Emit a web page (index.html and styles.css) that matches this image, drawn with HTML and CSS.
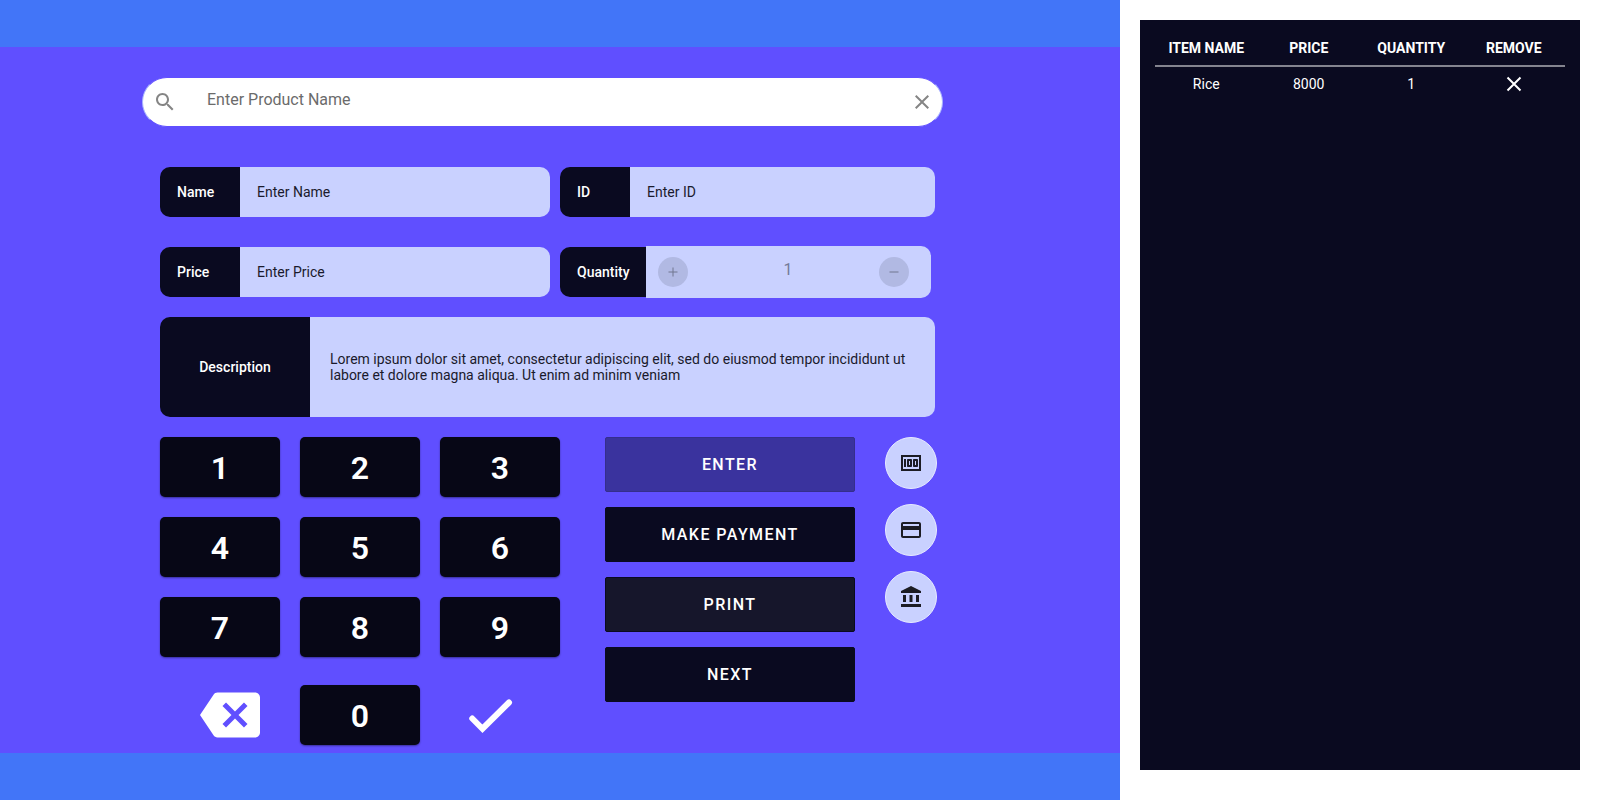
FILE: index.html
```html
<!DOCTYPE html>
<html lang="en">
<head>
<meta charset="utf-8">
<title>Point of Sale</title>
<link rel="stylesheet" href="styles.css">
</head>
<body>
<div class="app">
  <main class="register">
    <div class="register-panel">
      <form class="search" role="search">
        <svg class="icon search-icon" viewBox="0 0 24 24"><path d="M15.5 14h-.79l-.28-.27C15.41 12.59 16 11.11 16 9.5 16 5.91 13.09 3 9.5 3S3 5.91 3 9.5 5.91 16 9.5 16c1.61 0 3.09-.59 4.23-1.57l.27.28v.79l5 4.99L20.49 19l-4.99-5zm-6 0C7.01 14 5 11.99 5 9.5S7.01 5 9.5 5 14 7.01 14 9.5 11.99 14 9.5 14z"/></svg>
        <input class="search-input" type="text" placeholder="Enter Product Name" aria-label="Product name">
        <button class="plain-button" type="reset" aria-label="Clear search">
          <svg class="icon" viewBox="0 0 24 24"><path d="M19 6.41 17.59 5 12 10.59 6.41 5 5 6.41 10.59 12 5 17.59 6.41 19 12 13.41 17.59 19 19 17.59 13.41 12z"/></svg>
        </button>
      </form>

      <div class="fields">
        <div class="field">
          <label class="field-label" for="name">Name</label>
          <input class="field-input" id="name" type="text" placeholder="Enter Name">
        </div>
        <div class="field">
          <label class="field-label field-label-id" for="item-id">ID</label>
          <input class="field-input" id="item-id" type="text" placeholder="Enter ID">
        </div>
        <div class="field">
          <label class="field-label" for="price">Price</label>
          <input class="field-input" id="price" type="text" placeholder="Enter Price">
        </div>
        <div class="field">
          <label class="field-label field-label-quantity" for="quantity">Quantity</label>
          <div class="stepper">
            <button class="step-button" type="button" aria-label="Increase quantity">
              <svg class="step-icon" viewBox="0 0 10 10"><path d="M5 0.5v9M0.5 5h9"/></svg>
            </button>
            <input class="step-input" id="quantity" type="text" inputmode="numeric" value="1">
            <button class="step-button" type="button" aria-label="Decrease quantity">
              <svg class="step-icon" viewBox="0 0 10 10"><path d="M0.5 5h9"/></svg>
            </button>
          </div>
        </div>
      </div>

      <div class="description">
        <label class="description-label" for="description">Description</label>
        <textarea class="description-input" id="description">Lorem ipsum dolor sit amet, consectetur adipiscing elit, sed do eiusmod tempor incididunt ut labore et dolore magna aliqua. Ut enim ad minim veniam</textarea>
      </div>

      <div class="controls">
        <div class="keypad">
          <div class="keys">
            <button class="key" type="button">1</button>
            <button class="key" type="button">2</button>
            <button class="key" type="button">3</button>
            <button class="key" type="button">4</button>
            <button class="key" type="button">5</button>
            <button class="key" type="button">6</button>
            <button class="key" type="button">7</button>
            <button class="key" type="button">8</button>
            <button class="key" type="button">9</button>
          </div>
          <div class="keys">
            <button class="key-icon key-backspace" type="button" aria-label="Backspace">
              <svg class="icon-large" viewBox="0 0 24 24"><path d="M22 3H7c-.69 0-1.230.35-1.590.88L0 12l5.410 8.110c.36.53.9.89 1.590.89h15c1.100 0 2-.9 2-2V5c0-1.100-.9-2-2-2zm-3 12.590L17.590 17 14 13.410 10.410 17 9 15.590 12.590 12 9 8.410 10.410 7 14 10.590 17.590 7 19 8.410 15.410 12 19 15.590z"/></svg>
            </button>
            <button class="key" type="button">0</button>
            <button class="key-icon key-confirm" type="button" aria-label="Confirm">
              <svg class="icon-large" viewBox="0 0 24 24"><path d="M4.900 13.400 9 17.500 19.600 7" fill="none" stroke="currentColor" stroke-width="2.400" stroke-linecap="round"/></svg>
            </button>
          </div>
        </div>

        <div class="actions">
          <button class="action action-enter" type="button">ENTER</button>
          <button class="action" type="button">MAKE PAYMENT</button>
          <button class="action action-print" type="button">PRINT</button>
          <button class="action" type="button">NEXT</button>
        </div>

        <div class="methods">
          <button class="method" type="button" aria-label="Cash">
            <svg class="icon" viewBox="0 0 24 24"><path fill-rule="evenodd" d="M5 8h2v8H5zM12 8H9c-.55 0-1 .45-1 1v6c0 .55.45 1 1 1h3c.55 0 1-.45 1-1V9c0-.55-.45-1-1-1zm-1 6h-1v-4h1v4zM18 8h-3c-.55 0-1 .45-1 1v6c0 .55.45 1 1 1h3c.55 0 1-.45 1-1V9c0-.55-.45-1-1-1zm-1 6h-1v-4h1v4zM2 4v16h20V4H2zm2 14V6h16v12H4z"/></svg>
          </button>
          <button class="method" type="button" aria-label="Card">
            <svg class="icon" viewBox="0 0 24 24"><path d="M20 4H4c-1.110 0-1.990.89-1.990 2L2 18c0 1.110.89 2 2 2h16c1.110 0 2-.89 2-2V6c0-1.110-.89-2-2-2zm0 14H4v-6h16v6zm0-10H4V6h16v2z"/></svg>
          </button>
          <button class="method" type="button" aria-label="Bank transfer">
            <svg class="icon" viewBox="0 0 24 24"><path d="M12 1 2 6v2h20V6zM4 10h3v7H4zM10.500 10h3v7h-3zM17 10h3v7h-3zM2 19h20v3H2z"/></svg>
          </button>
        </div>
      </div>
    </div>
  </main>

  <aside class="cart">
    <table class="cart-table">
      <thead>
        <tr><th>ITEM NAME</th><th>PRICE</th><th>QUANTITY</th><th>REMOVE</th></tr>
      </thead>
      <tbody>
        <tr>
          <td>Rice</td><td>8000</td><td>1</td>
          <td>
            <button class="plain-button remove-button" type="button" aria-label="Remove Rice">
              <svg class="icon" viewBox="0 0 24 24"><path d="M5.500 5.500l13 13M18.500 5.500l-13 13"/></svg>
            </button>
          </td>
        </tr>
      </tbody>
    </table>
  </aside>
</div>
</body>
</html>
```

FILE: styles.css
```css
* {
  box-sizing: border-box;
}

body {
  margin: 0;
  background: #fff;
  font-family: Roboto, "Liberation Sans", sans-serif;
  font-size: 14px;
  line-height: 16px;
}

button,
input,
textarea {
  margin: 0;
  padding: 0;
  border: 0;
  font: inherit;
  color: inherit;
}

button {
  cursor: pointer;
}

.app {
  display: grid;
  grid-template-columns: 7fr 3fr;
  min-height: 100vh;
}

.register {
  display: flex;
  flex-direction: column;
  justify-content: center;
  background: #4275f8;
}

.register-panel {
  padding: 30px 143px 8px 142px;
  background: #604fff;
}

.icon {
  display: block;
  width: 24px;
  height: 24px;
  fill: currentColor;
}

.plain-button {
  background: none;
}

.search {
  display: flex;
  align-items: center;
  max-width: 801px;
  height: 50px;
  padding: 0 8px 0 10px;
  border: 1px solid #604fff;
  border-right-color: #a9b4ff;
  border-left-color: #a9b4ff;
  border-radius: 25px;
  background: #fff;
  color: #858585;
}

.search-input {
  flex: 1;
  min-width: 0;
  padding: 0 30px 5px;
  background: none;
  font-size: 16px;
  line-height: 20px;
  color: #6b6b6b;
}

.search-input::placeholder {
  color: #6b6b6b;
  opacity: 1;
}

.fields {
  display: grid;
  grid-template-columns: minmax(0, 390fr) minmax(0, 375fr);
  gap: 30px 10px;
  max-width: 793px;
  padding: 40px 0 20px 18px;
}

.field {
  display: flex;
  align-items: center;
  height: 50px;
}

.field-label,
.description-label {
  display: flex;
  align-items: center;
  border-radius: 10px 0 0 10px;
  background: #0a0a20;
  color: #fff;
  font-weight: 500;
}

.field-label {
  flex: none;
  width: 80px;
  height: 50px;
  padding: 0 17px;
}

.field-label-id {
  width: 70px;
}

.field-label-quantity {
  width: 86px;
}

.field-input {
  flex: 1;
  min-width: 0;
  height: 50px;
  padding: 0 17px;
  border-radius: 0 10px 10px 0;
  background: #c9d1ff;
}

.field-input::placeholder {
  color: #1a1a2c;
  opacity: 1;
}

.stepper {
  display: flex;
  flex: 1;
  align-items: center;
  min-width: 0;
  height: 52px;
  margin-right: 4px;
  padding: 0 22px 0 12px;
  border-radius: 0 10px 10px 0;
  background: #c9d1ff;
}

.step-button {
  display: grid;
  flex: none;
  place-items: center;
  width: 30px;
  height: 30px;
  border-radius: 50%;
  background: #b1b9e3;
}

.step-icon {
  width: 10px;
  height: 10px;
  stroke: #70768f;
  stroke-width: 1;
}

.step-input {
  flex: 1;
  min-width: 0;
  padding: 0 0 5px 9px;
  background: none;
  color: #747a99;
  font-size: 16px;
  line-height: 20px;
  text-align: center;
}

.description {
  display: flex;
  max-width: 793px;
  height: 100px;
  padding-left: 18px;
}

.description-label {
  flex: none;
  justify-content: center;
  width: 150px;
}

.description-input {
  flex: 1;
  min-width: 0;
  padding: 34px 20px;
  border-radius: 0 10px 10px 0;
  background: #c9d1ff;
  color: #1a1a2c;
  resize: none;
  overflow: hidden;
}

.controls {
  display: flex;
  align-items: flex-start;
  padding: 20px 0 0 18px;
}

.keypad {
  display: grid;
  gap: 28px;
  margin-right: 45px;
}

.keys {
  display: grid;
  grid-template-columns: repeat(3, 120px);
  gap: 20px;
}

.key {
  height: 60px;
  padding-top: 2px;
  border-radius: 5px;
  background: #070716;
  box-shadow: 0 1px 2px rgba(0, 0, 0, 0.4);
  color: #fff;
  font-size: 32px;
  font-weight: 600;
  line-height: 38px;
}

.key-icon {
  display: flex;
  height: 60px;
  background: none;
  color: #fff;
}

.key-backspace {
  padding-left: 40px;
}

.key-confirm {
  padding-left: 20px;
}

.icon-large {
  display: block;
  width: 60px;
  height: 60px;
  fill: currentColor;
}

.actions {
  display: grid;
  gap: 15px;
  margin-right: 30px;
}

.action {
  width: 250px;
  height: 55px;
  border: 1px solid #0a0a20;
  border-radius: 2px;
  background: #0a0a20;
  color: #fff;
  font-size: 16px;
  font-weight: 500;
  letter-spacing: 0.09em;
}

.action-enter {
  border-color: #352e8c;
  background: #3a339e;
}

.action-print {
  background: #16162b;
}

.methods {
  display: grid;
  gap: 15px;
}

.method {
  display: grid;
  place-items: center;
  width: 52px;
  height: 52px;
  border: 1px solid #e8ebff;
  border-radius: 50%;
  background: #c9d1ff;
  color: #1c1c24;
}

.cart {
  margin: 20px 20px 30px;
  padding: 15px;
  background: #0a0a20;
  color: #fff;
}

.cart-table {
  width: 100%;
  border-collapse: collapse;
  table-layout: fixed;
  text-align: center;
}

.cart-table th {
  height: 31px;
  padding: 4px 0 9px;
  border-bottom: 2px solid #84848f;
  font-weight: 700;
}

.cart-table td {
  padding: 5px 0;
}

.remove-button {
  display: block;
  margin: 0 auto;
  stroke: #fff;
  stroke-width: 2;
}
```
